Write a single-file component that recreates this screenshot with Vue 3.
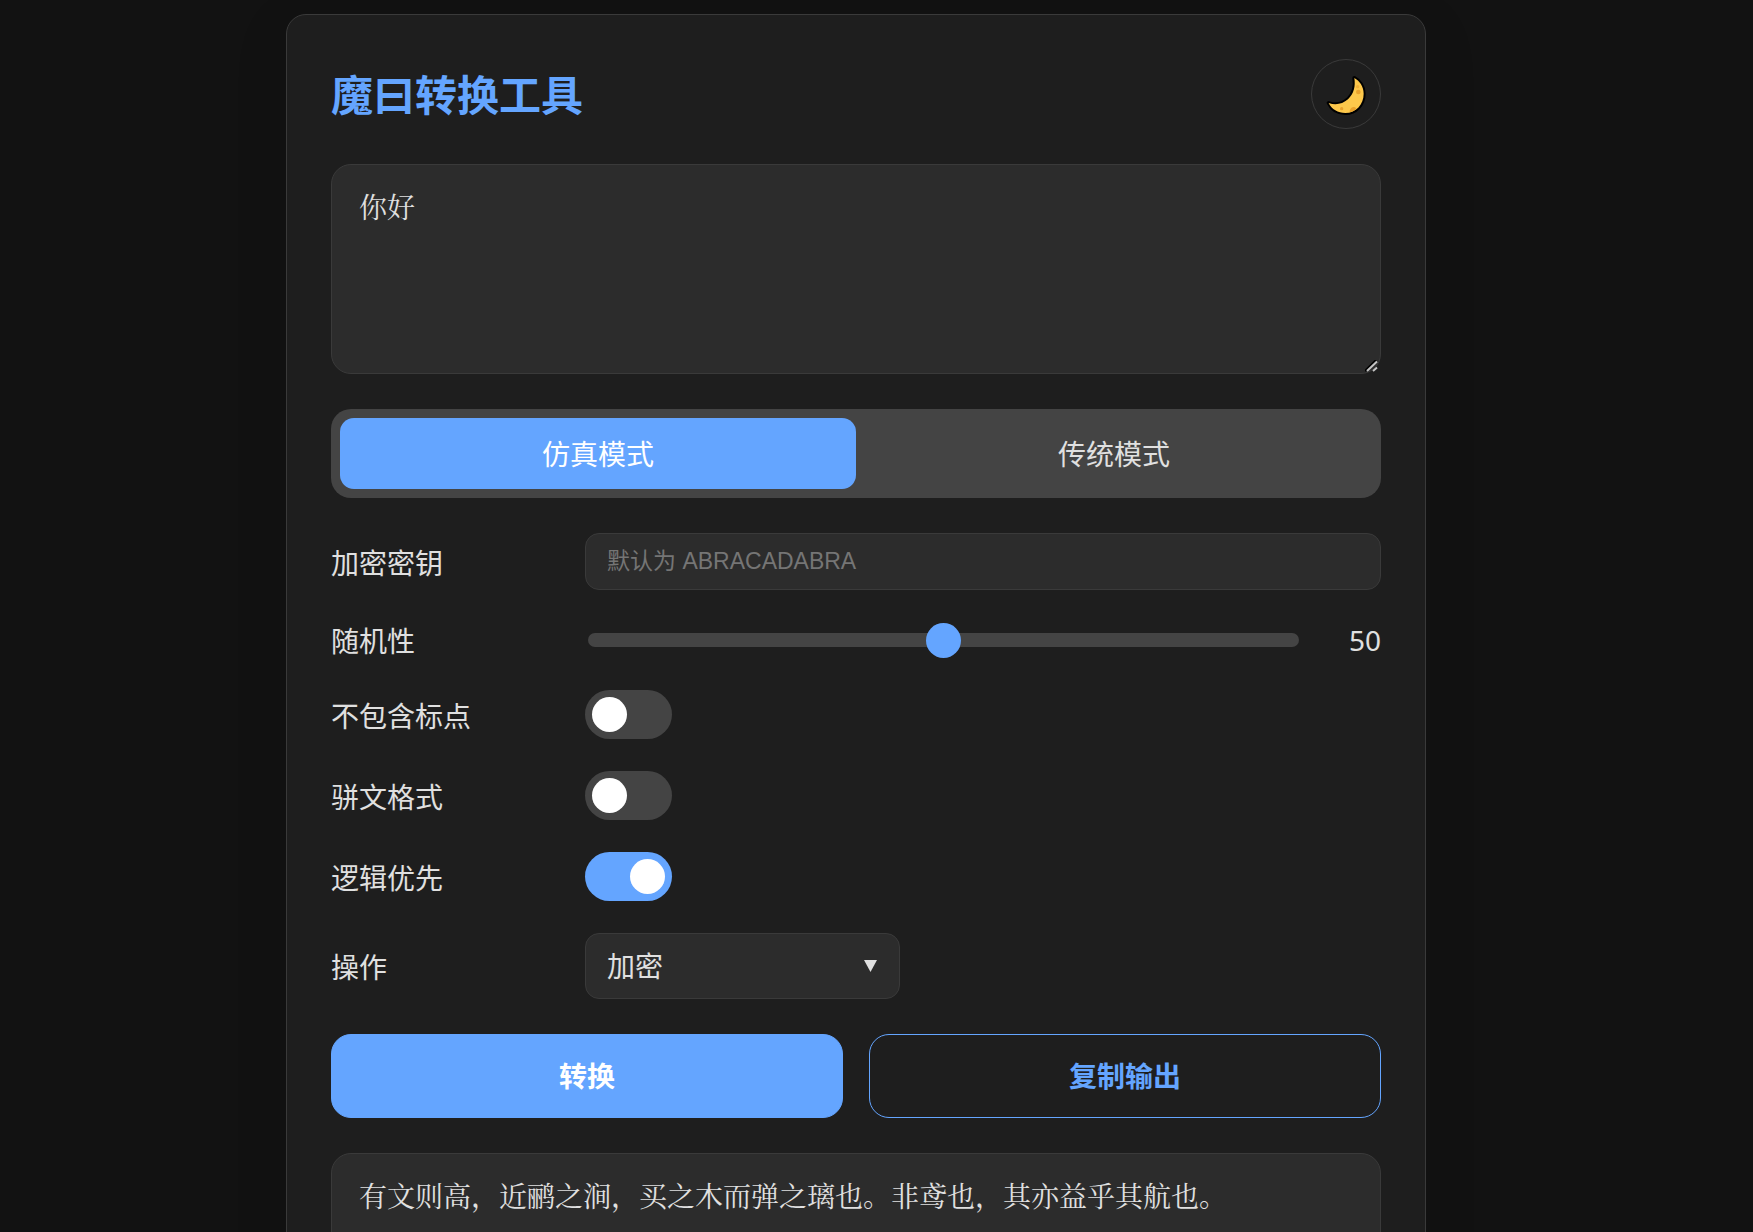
<script setup>
import { ref } from 'vue'

const source = ref('你好')
const output = ref('有文则高，近鹂之涧，买之木而弹之璃也。非鸢也，其亦益乎其航也。')
const mode = ref('仿真模式')
const modes = ['仿真模式', '传统模式']
const key = ref('')
const randomness = ref(50)
const operation = ref('加密')
const toggles = ref([
  { id: 'no-punctuation', label: '不包含标点', on: false },
  { id: 'parallel-prose', label: '骈文格式', on: false },
  { id: 'logic-first', label: '逻辑优先', on: true }
])
</script>

<template>
  <div class="page">
    <main class="card">
      <header class="header">
        <h1>魔曰转换工具</h1>
        <button class="theme" type="button" aria-label="切换主题">
          <svg viewBox="75 69 126 126" aria-hidden="true">
            <path
              d="M163 84C178 92 191 109 191 131C191 163 168 189 136 189C114 189 95 178 86 159C107 167 128 162 144 148C162 131 167 108 163 84Z"
              fill="#fdc84b" stroke="#000" stroke-width="12" stroke-linejoin="round" paint-order="stroke"
            />
            <circle cx="175" cy="126" r="7" fill="#eaa22c" />
            <circle cx="173" cy="110" r="5" fill="#f2b23a" />
            <circle cx="125" cy="176" r="5" fill="#eaa22c" />
            <path d="M149 187C148 173 163 166 169 176C163 182 157 185 149 187Z" fill="#eaa22c" />
          </svg>
        </button>
      </header>

      <div class="source">
        <textarea v-model="source" class="text" aria-label="输入" spellcheck="false"></textarea>
        <svg class="grip" viewBox="0 0 13 12" aria-hidden="true">
          <path d="M0 11L11 0" stroke="#000" />
          <path d="M2 11L12 1.500M8 11L12 7.500" stroke="#c4c4c4" />
        </svg>
      </div>

      <div class="tabs">
        <button
          v-for="item in modes"
          :key="item"
          type="button"
          :class="['tab', { active: item === mode }]"
          @click="mode = item"
        >{{ item }}</button>
      </div>

      <div class="form">
        <div class="row">
          <label for="key">加密密钥</label>
          <input id="key" v-model="key" class="key" type="text" placeholder="默认为 ABRACADABRA">
        </div>
        <div class="row slider-row">
          <label for="randomness">随机性</label>
          <input id="randomness" v-model="randomness" class="slider" type="range" min="0" max="100">
          <output for="randomness">{{ randomness }}</output>
        </div>
        <div v-for="item in toggles" :key="item.id" class="row">
          <label :for="item.id">{{ item.label }}</label>
          <input :id="item.id" v-model="item.on" class="toggle" type="checkbox">
        </div>
        <div class="row">
          <label for="operation">操作</label>
          <div class="select">
            <select id="operation" v-model="operation">
              <option>加密</option>
              <option>解密</option>
            </select>
            <svg class="arrow" viewBox="0 0 13 12" aria-hidden="true"><path d="M0 0H13L6.500 12Z" /></svg>
          </div>
        </div>
      </div>

      <div class="actions">
        <button class="primary" type="button">转换</button>
        <button class="outline" type="button">复制输出</button>
      </div>

      <textarea v-model="output" class="text" aria-label="输出" readonly></textarea>
    </main>
  </div>
</template>

<style>
html {
  color-scheme: dark;
  background: #121212;
  scrollbar-width: none;
}
</style>

<style scoped>
.page {
  --accent: #64a5ff;
  --field: #2c2c2c;
  --line: #3a3a3a;
  --track: #444;
  padding: 14px 41px 36px 0;
  color: #e0e0e0;
  font: 28px/36px "Noto Sans", "Noto Sans CJK SC", sans-serif;
}
.page *,
.page *::before {
  box-sizing: border-box;
}
button,
select {
  font: inherit;
  color: inherit;
  cursor: pointer;
}
.card {
  display: flex;
  flex-direction: column;
  gap: 35px;
  max-width: 1140px;
  margin: 0 auto;
  padding: 44px;
  border: 1px solid var(--line);
  border-radius: 20px;
  background: #1e1e1e;
  box-shadow: 0 14px 56px rgba(0, 0, 0, 0.1);
}
.header {
  display: flex;
  align-items: center;
  justify-content: space-between;
}
h1 {
  margin: 0;
  padding-top: 2px;
  color: var(--accent);
  font-size: 42px;
  line-height: 60px;
}
.theme {
  display: grid;
  place-items: center;
  width: 70px;
  height: 70px;
  padding: 0;
  border: 1px solid var(--line);
  border-radius: 50%;
  background: none;
}
.theme svg {
  width: 42px;
  height: 42px;
  overflow: visible;
}
.source {
  position: relative;
}
.text {
  display: block;
  width: 100%;
  height: 210px;
  padding: 20px 27px;
  border: 1px solid var(--line);
  border-radius: 20px;
  background: var(--field);
  color: #e0e0e0;
  font: 400 28px/43px "Noto Serif CJK SC", "Noto Sans CJK SC", serif;
  resize: vertical;
}
.text::-webkit-resizer {
  background: none;
}
.grip {
  position: absolute;
  right: 3px;
  bottom: 2px;
  width: 13px;
  height: 12px;
  fill: none;
  stroke-width: 2px;
  pointer-events: none;
}
.tabs {
  display: flex;
  padding: 9px;
  border-radius: 20px;
  background: var(--track);
}
.tab {
  flex: 1;
  height: 71px;
  padding: 0;
  border: 0;
  border-radius: 14px;
  background: none;
}
.tab.active {
  background: var(--accent);
  color: #fff;
}
.form {
  display: flex;
  flex-direction: column;
  gap: 32px;
}
.row {
  display: flex;
  align-items: center;
}
label {
  flex: 0 0 254px;
  padding-top: 2px;
}
.key {
  flex: 1;
  min-width: 0;
  height: 57px;
  padding: 0 21px;
  border: 1px solid var(--line);
  border-radius: 14px;
  background: var(--field);
  color: #e0e0e0;
  font: 23px "Liberation Sans", "Noto Sans CJK SC", sans-serif;
}
.key::placeholder {
  color: #757575;
}
.slider-row {
  height: 36px;
}
.slider {
  flex: 1;
  min-width: 0;
  height: 14px;
  margin: 0 3px;
  border-radius: 7px;
  background: var(--track);
  appearance: none;
}
.slider::-webkit-slider-thumb {
  width: 35px;
  height: 35px;
  border-radius: 50%;
  background: var(--accent);
  appearance: none;
}
output {
  width: 79px;
  text-align: right;
}
.toggle {
  display: flex;
  align-items: center;
  width: 87px;
  height: 49px;
  margin: 0;
  padding: 0 7px;
  border-radius: 25px;
  background: var(--track);
  appearance: none;
}
.toggle::before {
  content: "";
  width: 35px;
  height: 35px;
  border-radius: 50%;
  background: #fff;
}
.toggle:checked {
  justify-content: flex-end;
  background: var(--accent);
}
.select {
  position: relative;
  width: 315px;
}
select {
  display: block;
  width: 100%;
  height: 66px;
  padding: 0 21px;
  border: 1px solid var(--line);
  border-radius: 14px;
  background: var(--field);
  appearance: none;
}
.arrow {
  position: absolute;
  top: 27px;
  right: 23px;
  width: 13px;
  height: 12px;
  fill: #e0e0e0;
  pointer-events: none;
}
.actions {
  display: flex;
  gap: 26px;
}
.actions button {
  flex: 1;
  height: 84px;
  padding: 0;
  border: 1px solid var(--accent);
  border-radius: 20px;
  font-weight: 700;
}
.primary {
  background: var(--accent);
  color: #fff;
}
.outline {
  background: none;
  color: var(--accent);
}
</style>
